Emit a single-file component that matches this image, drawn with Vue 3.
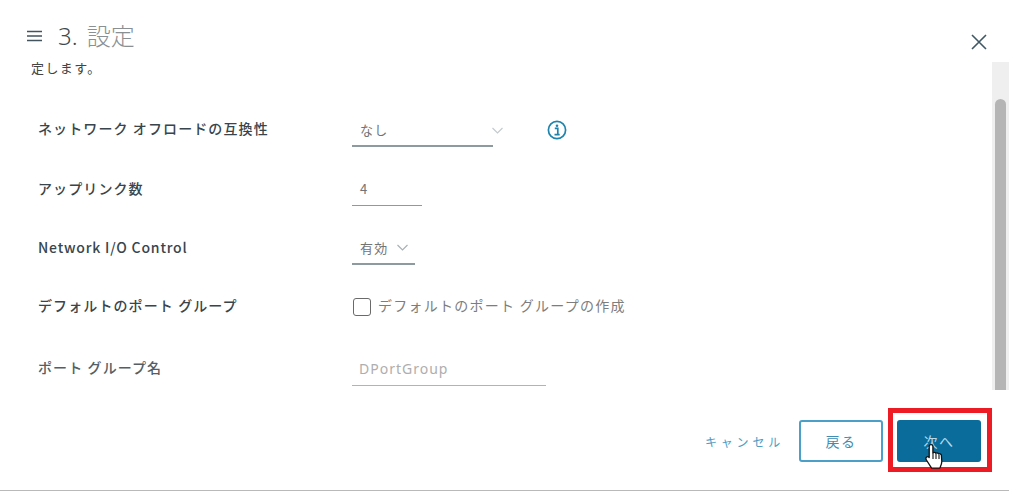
<script setup>
const offloadLabel = 'ネットワーク オフロードの互換性'
</script>

<template>
  <div class="dialog">
    <header class="head">
      <svg class="menu" width="16" height="12" viewBox="0 0 16 12"><path d="M0 1.5h15M0 6h15M0 10.5h15" stroke="#44545e" stroke-width="1.5" fill="none"/></svg>
      <h1 class="title"><span class="num">3.</span> <span class="word">設定</span></h1>
      <svg class="close" width="16" height="16" viewBox="0 0 16 16"><path d="M1 1l14 14M15 1L1 15" stroke="#3f5866" stroke-width="1.6" fill="none"/></svg>
    </header>

    <div class="main">
      <div class="content">
        <p class="intro">定します。</p>
        <div class="form">
          <div class="row r1">
            <label class="lab up">{{ offloadLabel }}</label>
            <div class="ctl">
              <div class="select w141"><span>なし</span></div>
              <svg class="chev outer" width="11" height="7" viewBox="0 0 11 7"><path d="M.5 1l5 5 5-5" stroke="#c4cacd" stroke-width="1.2" fill="none"/></svg>
              <svg class="info" width="20" height="20" viewBox="0 0 20 20">
                <circle cx="10" cy="10" r="8.6" stroke="#1f84ac" stroke-width="1.7" fill="none"/>
                <circle cx="10" cy="5.7" r="1.3" fill="#1f84ac"/>
                <path d="M7.8 8.4h3v6M7.5 14.6h5.2" stroke="#1f84ac" stroke-width="1.7" fill="none"/>
              </svg>
            </div>
          </div>
          <div class="row r2">
            <label class="lab">アップリンク数</label>
            <div class="ctl"><div class="select w70"><span>4</span></div></div>
          </div>
          <div class="row r3">
            <label class="lab latin">Network I/O Control</label>
            <div class="ctl">
              <div class="select w63">
                <span>有効</span>
                <svg class="chev" width="11" height="7" viewBox="0 0 11 7"><path d="M.5 1l5 5 5-5" stroke="#a9b1b5" stroke-width="1.2" fill="none"/></svg>
              </div>
            </div>
          </div>
          <div class="row r4">
            <label class="lab up">デフォルトのポート グループ</label>
            <div class="ctl">
              <span class="box"></span>
              <span class="check">デフォルトのポート グループの作成</span>
            </div>
          </div>
          <div class="row r5">
            <label class="lab dim">ポート グループ名</label>
            <div class="ctl"><div class="select w194 off"><span>DPortGroup</span></div></div>
          </div>
        </div>
      </div>
      <div class="track"><div class="thumb"></div></div>
    </div>

    <footer class="foot">
      <button class="btn link">キャンセル</button>
      <button class="btn outline">戻る</button>
      <button class="btn primary">次へ</button>
      <span class="mark"></span>
      <svg class="hand" width="22" height="26" viewBox="0 0 22 26">
        <path d="M7 1.6c1.1 0 1.9.8 1.9 1.9v6.3c.9-.6 2.3-.5 2.9.4.9-.5 2.2-.3 2.8.6 1-.4 2.6.1 2.8 1.5l.4 6.2c0 2.4-.9 4-2 6.6H7.600L2.400 17c-.8-1.200-.6-2.400.2-3 .8-.6 1.900-.4 2.600.5V3.500C5.100 2.400 5.900 1.600 7 1.600z" fill="#fff" stroke="#111" stroke-width="1.300" stroke-linejoin="round"/>
        <path d="M9 10v6M12 10.500V16M15 11.500V16" stroke="#111" stroke-width="1.100" fill="none"/>
      </svg>
    </footer>
    <div class="edge"></div>
  </div>
</template>

<style>
html, body { margin: 0; background: #fff; }
</style>

<style scoped>
.dialog {
  position: relative;
  width: 1009px;
  height: 493px;
  background: #fff;
  display: flex;
  flex-direction: column;
  overflow: hidden;
  font-family: "Noto Sans CJK JP", "Noto Sans", sans-serif;
}
.head {
  height: 62px;
  flex: none;
  display: flex;
  align-items: flex-start;
  padding: 0 22px 0 27px;
  box-sizing: border-box;
}
.menu { margin-top: 30px; }
.title {
  margin: 17px 0 0 15px;
  font-size: 24px;
  line-height: 36px;
  font-weight: 300;
  font-family: "Noto Sans", "Noto Sans CJK JP", sans-serif;
  color: #3e4a50;
}
.word { color: #8a8f92; font-family: "Noto Sans CJK JP", sans-serif; font-weight: 300; margin-left: 3px; }
.close { margin: 34px 0 0 auto; }
.main { height: 328px; flex: none; display: flex; }
.content { flex: 1; padding-left: 31px; min-width: 0; overflow: hidden; }
.intro {
  margin: 0;
  height: 13px;
  font-size: 13px;
  line-height: 12px;
  letter-spacing: 1.400px;
  color: #444;
}
.form { padding: 0 0 0 7px; margin-top: 39px; }
.row { display: flex; align-items: center; }
.r1 { height: 30px; }
.r2 { height: 30px; margin-top: 29px; }
.r3 { height: 30px; margin-top: 29px; }
.r4 { height: 30px; margin-top: 29px; }
.r5 { height: 30px; margin-top: 31px; }
.lab {
  width: 314px;
  flex: none;
  font-size: 14px;
  font-weight: 500;
  color: #39454c;
  letter-spacing: 1.100px;
}
.up { padding-bottom: 2px; }
.latin { letter-spacing: .8px; }
.dim { color: #565e63; }
.ctl { display: flex; align-items: center; position: relative; height: 30px; }
.select {
  box-sizing: border-box;
  height: 31px;
  padding: 4px 0 0 8px;
  border-bottom: 1px solid #8d9ba1;
  font-size: 13px;
  line-height: 20px;
  letter-spacing: 1.300px;
  color: #737373;
  display: flex;
  margin-top: 4px;
}
.w141 { width: 141px; border-bottom-width: 2px; }
.w70 { width: 70px; }
.w63 { width: 63px; border-bottom-width: 2px; justify-content: flex-start; }
.w194 { width: 194px; margin-top: 6px; padding-left: 7px; color: #aeaeae; font-size: 14px; letter-spacing: 1px; font-family: "Noto Sans", sans-serif; border-bottom-color: #b3b3b3; }
.chev { margin: 6px 0 0 8px; }
.outer { margin: 2px 0 0 -1px; }
.info { margin: 1px 0 0 44px; }
.box {
  width: 18px;
  height: 18px;
  box-sizing: border-box;
  border: 1px solid #6a6a6a;
  border-radius: 3px;
  margin-top: 2px;
  margin-left: 1px;
}
.check {
  margin-left: 7px;
  padding-bottom: 2px;
  font-size: 14px;
  letter-spacing: 1.260px;
  color: #7d7d7d;
}
.track { width: 17px; background: #efefef; display: flex; justify-content: center; flex: none; }
.thumb { width: 11px; height: 291px; margin-top: 37px; background: #b5b5b5; border-radius: 6px 6px 0 0; }
.foot {
  position: relative;
  flex: 1;
  display: flex;
  align-items: flex-start;
  padding: 30px 28px 0 0;
  justify-content: flex-end;
}
.btn {
  box-sizing: border-box;
  height: 42px;
  width: 84px;
  border-radius: 3px;
  font-family: inherit;
  font-size: 14px;
  letter-spacing: 1.500px;
  padding: 0;
  background: none;
  cursor: pointer;
}
.link { width: auto; border: 0; color: #4c9cc4; font-size: 12px; letter-spacing: 3.800px; margin-right: 15px; }
.outline { border: 2px solid #4c9fc6; color: #3f8db4; background: #fff; margin-right: 14px; }
.primary { border: 0; background: #0a6c9b; color: #b8d9e8; }
.mark {
  position: absolute;
  left: 888px;
  top: 18px;
  width: 104px;
  height: 64px;
  box-sizing: border-box;
  border: 5px solid #ed1c24;
  pointer-events: none;
}
.hand { position: absolute; left: 924px; top: 53px; }
.edge { position: absolute; left: 0; top: 490px; width: 1009px; height: 1px; background: #b9b9b9; }
</style>
